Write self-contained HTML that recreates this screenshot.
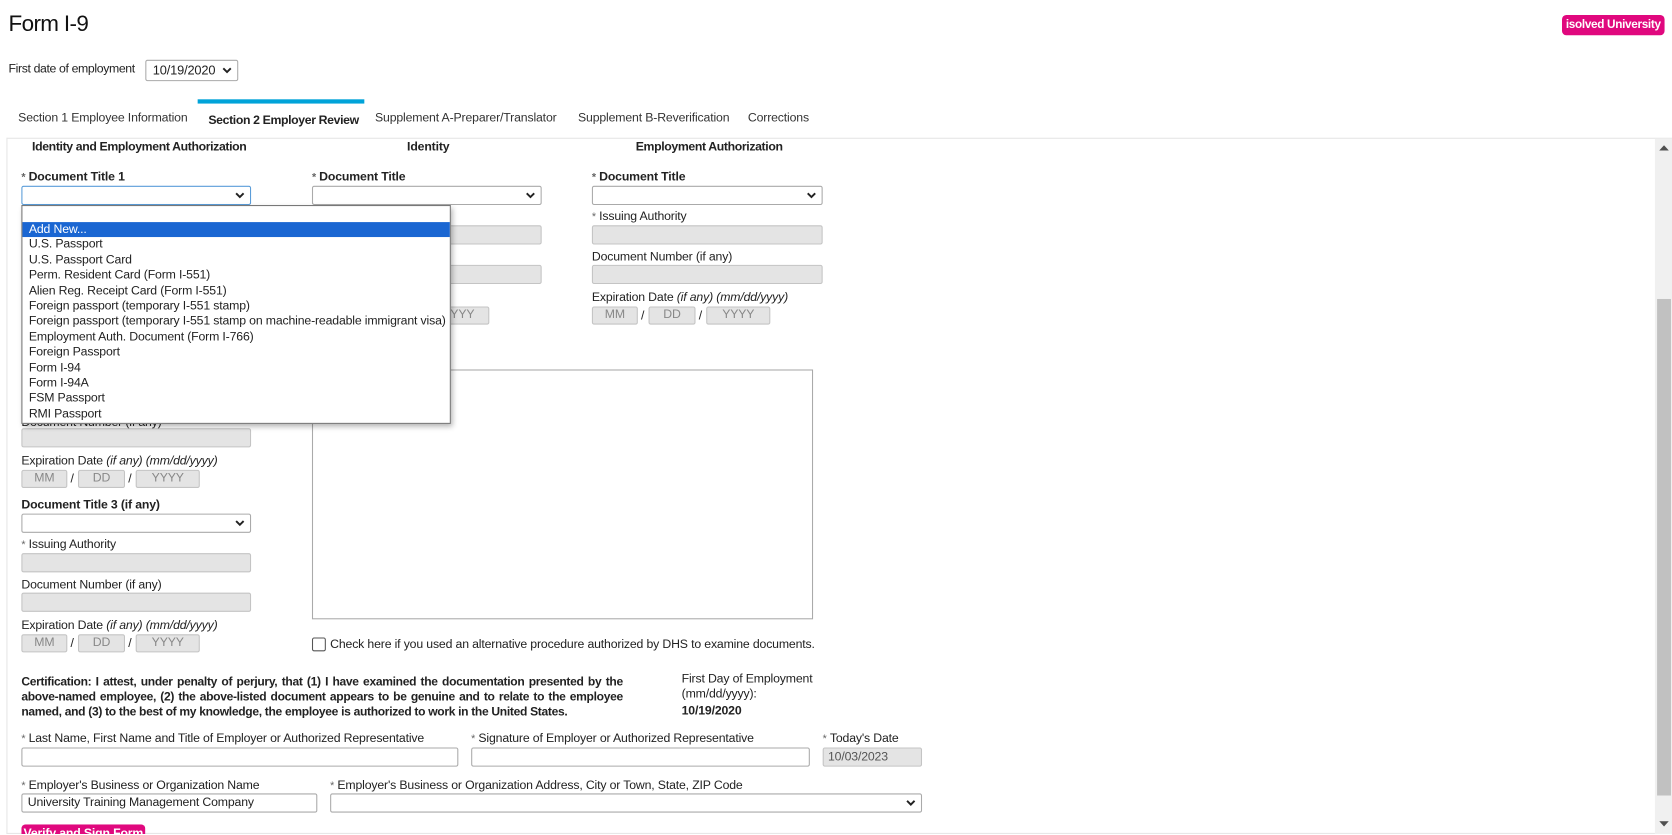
<!DOCTYPE html>
<html><head><meta charset="utf-8">
<style>
*{box-sizing:border-box;margin:0;padding:0}
html,body{width:1672px;height:835px;overflow:hidden;background:#fff}
#w{position:absolute;left:0;top:0;width:1565px;height:782px;transform:scale(1.0684,1.0678);transform-origin:0 0;font-family:"Liberation Sans",Arial,sans-serif;color:#222;font-size:11.5px;letter-spacing:-0.15px}
.a{position:absolute;white-space:nowrap;line-height:14px}
.b{font-weight:bold}
.st{color:#666;font-size:10px;margin-right:3px}
.in{position:absolute;height:18px;border:1px solid #c4c4c4;background:#e4e4e4;border-radius:2px}
.wi{position:absolute;height:18px;border:1px solid #aaa;background:#fff;border-radius:2px}
.dt{position:absolute;height:17px;border:1px solid #c4c4c4;background:#e4e4e4;border-radius:2px;color:#888;text-align:center;line-height:15px;font-size:11.5px}
.chev{position:absolute;right:5px;top:5px}
i{font-style:italic}
</style></head><body><div id="w">
<div class="a" style="left:8px;top:10px;font-size:21px;line-height:26px;letter-spacing:-0.6px;color:#111">Form I-9</div>
<div class="a b" style="left:1462px;top:14px;width:96px;height:19px;background:#e0087e;color:#fff;border-radius:4px;text-align:center;line-height:19px;font-size:11px;letter-spacing:-0.3px">isolved University</div>

<div class="a" style="left:8px;top:58px;letter-spacing:-0.35px">First date of employment</div>
<div class="wi" style="left:136px;top:56px;width:87px;height:20px;padding-left:6px;line-height:18px;font-size:12px">10/19/2020<svg class="chev" style="top:6px" width="9" height="6" viewBox="0 0 9 6"><path d="M1 1L4.5 4.5L8 1" stroke="#222" stroke-width="1.8" fill="none"/></svg></div>

<div style="position:absolute;left:185px;top:93px;width:156px;height:4px;background:#00a3d9"></div>
<div class="a" style="left:17px;top:104px;color:#333">Section 1 Employee Information</div>
<div class="a b" style="left:195px;top:106px;color:#222;letter-spacing:-0.35px">Section 2 Employer Review</div>
<div class="a" style="left:351px;top:104px;color:#333">Supplement A-Preparer/Translator</div>
<div class="a" style="left:541px;top:104px;color:#333">Supplement B-Reverification</div>
<div class="a" style="left:700px;top:104px;color:#333">Corrections</div>

<div style="position:absolute;left:6px;top:129px;width:1559px;height:652px;border:1px solid #e6e6e6;border-right:none"></div>
<div style="position:absolute;left:1549px;top:130px;width:17px;height:651px;background:#f0f0f0"></div>
<div style="position:absolute;left:1551px;top:280px;width:13px;height:465px;background:#c1c1c1"></div>
<svg style="position:absolute;left:1553px;top:136px" width="9" height="6"><path d="M0 5L4.5 0L9 5Z" fill="#505050"/></svg>
<svg style="position:absolute;left:1553px;top:769px" width="9" height="6"><path d="M0 0L4.5 5L9 0Z" fill="#505050"/></svg>

<div class="a b" style="left:30px;top:131px;letter-spacing:-0.35px">Identity and Employment Authorization</div>
<div class="a b" style="left:381px;top:131px">Identity</div>
<div class="a b" style="left:595px;top:131px;letter-spacing:-0.35px">Employment Authorization</div>

<div class="a b" style="left:20px;top:159px"><span class="st">*</span>Document Title 1</div>
<div class="wi" style="left:20px;top:174px;width:215px;border-color:#5b9dd9"><svg class="chev" width="9" height="6"><path d="M1 1L4.5 4.5L8 1" stroke="#222" stroke-width="1.8" fill="none"/></svg></div>
<div class="a b" style="left:292px;top:159px"><span class="st">*</span>Document Title</div>
<div class="wi" style="left:292px;top:174px;width:215px"><svg class="chev" width="9" height="6"><path d="M1 1L4.5 4.5L8 1" stroke="#222" stroke-width="1.8" fill="none"/></svg></div>
<div class="a b" style="left:554px;top:159px"><span class="st">*</span>Document Title</div>
<div class="wi" style="left:554px;top:174px;width:216px"><svg class="chev" width="9" height="6"><path d="M1 1L4.5 4.5L8 1" stroke="#222" stroke-width="1.8" fill="none"/></svg></div>

<div class="in" style="left:292px;top:211px;width:215px"></div>
<div class="in" style="left:292px;top:248px;width:215px"></div>
<div class="a" style="left:292px;top:272px"><i>(mm/dd/yyyy)</i></div>
<div class="dt" style="left:400px;top:287px;width:58px">YYYY</div>

<div class="a" style="left:554px;top:196px"><span class="st">*</span>Issuing Authority</div>
<div class="in" style="left:554px;top:211px;width:216px"></div>
<div class="a" style="left:554px;top:234px">Document Number (if any)</div>
<div class="in" style="left:554px;top:248px;width:216px"></div>
<div class="a" style="left:554px;top:272px">Expiration Date <i>(if any) (mm/dd/yyyy)</i></div>
<div class="dt" style="left:554px;top:287px;width:43px">MM</div><div class="a" style="left:600px;top:289px">/</div>
<div class="dt" style="left:607px;top:287px;width:44px">DD</div><div class="a" style="left:654px;top:289px">/</div>
<div class="dt" style="left:661px;top:287px;width:60px">YYYY</div>

<div style="position:absolute;left:292px;top:346px;width:469px;height:234px;border:1px solid #aaa"></div>

<div class="a" style="left:20px;top:389px">Document Number (if any)</div>
<div class="in" style="left:20px;top:401px;width:215px"></div>
<div class="a" style="left:20px;top:425px">Expiration Date <i>(if any) (mm/dd/yyyy)</i></div>
<div class="dt" style="left:20px;top:440px;width:43px">MM</div><div class="a" style="left:66px;top:442px">/</div>
<div class="dt" style="left:73px;top:440px;width:44px">DD</div><div class="a" style="left:120px;top:442px">/</div>
<div class="dt" style="left:127px;top:440px;width:60px">YYYY</div>
<div class="a b" style="left:20px;top:466px">Document Title 3 (if any)</div>
<div class="wi" style="left:20px;top:481px;width:215px"><svg class="chev" width="9" height="6"><path d="M1 1L4.5 4.5L8 1" stroke="#222" stroke-width="1.8" fill="none"/></svg></div>
<div class="a" style="left:20px;top:503px"><span class="st">*</span>Issuing Authority</div>
<div class="in" style="left:20px;top:518px;width:215px"></div>
<div class="a" style="left:20px;top:541px">Document Number (if any)</div>
<div class="in" style="left:20px;top:555px;width:215px"></div>
<div class="a" style="left:20px;top:579px">Expiration Date <i>(if any) (mm/dd/yyyy)</i></div>
<div class="dt" style="left:20px;top:594px;width:43px">MM</div><div class="a" style="left:66px;top:596px">/</div>
<div class="dt" style="left:73px;top:594px;width:44px">DD</div><div class="a" style="left:120px;top:596px">/</div>
<div class="dt" style="left:127px;top:594px;width:60px">YYYY</div>

<div style="position:absolute;left:292px;top:597px;width:13px;height:13px;border:1px solid #555;border-radius:2px;background:#fff"></div>
<div class="a" style="left:309px;top:597px">Check here if you used an alternative procedure authorized by DHS to examine documents.</div>

<div class="a b" style="left:20px;top:632px;width:563px;white-space:normal;text-align:justify;text-align-last:left;line-height:14px;font-size:11.3px;letter-spacing:-0.3px">Certification: I attest, under penalty of perjury, that (1) I have examined the documentation presented by the above-named employee, (2) the above-listed document appears to be genuine and to relate to the employee named, and (3) to the best of my knowledge, the employee is authorized to work in the United States.</div>
<div class="a" style="left:638px;top:629px">First Day of Employment</div>
<div class="a" style="left:638px;top:643px">(mm/dd/yyyy):</div>
<div class="a b" style="left:638px;top:659px">10/19/2020</div>

<div class="a" style="left:20px;top:685px"><span class="st">*</span>Last Name, First Name and Title of Employer or Authorized Representative</div>
<div class="wi" style="left:20px;top:700px;width:409px"></div>
<div class="a" style="left:441px;top:685px"><span class="st">*</span>Signature of Employer or Authorized Representative</div>
<div class="wi" style="left:441px;top:700px;width:317px"></div>
<div class="a" style="left:770px;top:685px"><span class="st">*</span>Today's Date</div>
<div class="in" style="left:770px;top:700px;width:93px;padding-left:4px;line-height:16px;color:#555">10/03/2023</div>

<div class="a" style="left:20px;top:729px"><span class="st">*</span>Employer's Business or Organization Name</div>
<div class="wi" style="left:20px;top:743px;width:277px;padding-left:5px;line-height:16px">University Training Management Company</div>
<div class="a" style="left:309px;top:729px"><span class="st">*</span>Employer's Business or Organization Address, City or Town, State, ZIP Code</div>
<div class="wi" style="left:309px;top:743px;width:554px"><svg class="chev" width="9" height="6"><path d="M1 1L4.5 4.5L8 1" stroke="#222" stroke-width="1.8" fill="none"/></svg></div>

<div style="position:absolute;left:20px;top:772px;width:116px;height:9px;overflow:hidden"><div style="background:#e0087e;border-radius:4px;height:20px;color:#fff;font-weight:bold;text-align:center;line-height:18px">Verify and Sign Form</div></div>

<div style="position:absolute;left:20px;top:192px;width:402px;height:205px;border:1px solid #767676;background:#fff;box-shadow:2px 3px 5px rgba(0,0,0,.3);font-size:11.5px">
<div style="height:15px"></div>
<div style="height:14.4px;line-height:14.4px;background:#1a66d2;color:#fff;padding-left:6px">Add New...</div>
<div style="line-height:14.4px;padding-left:6px;color:#222">U.S. Passport<br>U.S. Passport Card<br>Perm. Resident Card (Form I-551)<br>Alien Reg. Receipt Card (Form I-551)<br>Foreign passport (temporary I-551 stamp)<br>Foreign passport (temporary I-551 stamp on machine-readable immigrant visa)<br>Employment Auth. Document (Form I-766)<br>Foreign Passport<br>Form I-94<br>Form I-94A<br>FSM Passport<br>RMI Passport</div>
</div>
</div></body></html>
